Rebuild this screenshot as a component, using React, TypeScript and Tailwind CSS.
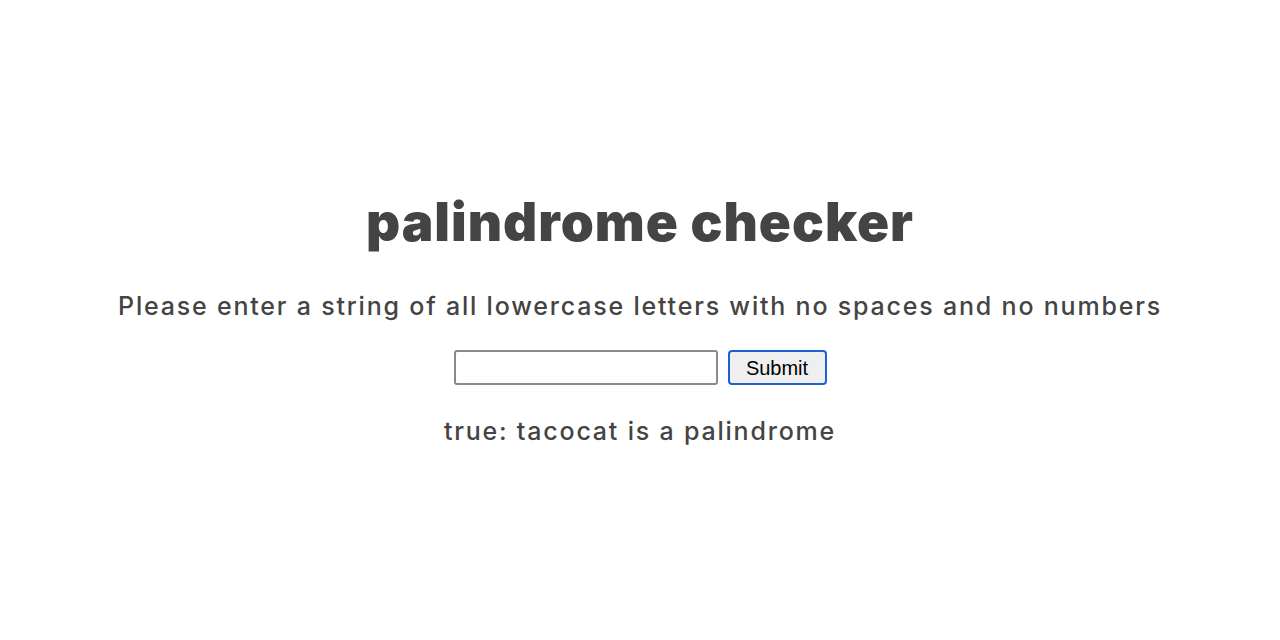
const App = () => {
  return (
    <div className="w-full h-[640px] bg-white flex flex-col items-center text-[#444] font-['Inter','Noto_Sans',sans-serif]">
      {/* TITLE */}
      <h1 className="mt-[190px] text-[53px] leading-[64px] font-black tracking-[1px]">
        palindrome checker
      </h1>

      <p className="mt-[36px] text-[25px] leading-[32px] font-medium tracking-[1.8px]">
        Please enter a string of all lowercase letters with no spaces and no numbers
      </p>

      {/* FORM */}
      <form className="mt-[28px] flex items-center gap-[10px]" onSubmit={(e) => e.preventDefault()}>
        <input
          type="text"
          className="w-[264px] h-[35px] border-2 border-[#8a8a8a] rounded-[3px] bg-white px-1 text-[18px]"
        />
        <button
          type="submit"
          className="w-[99px] h-[35px] border-2 border-[#1f5fd6] rounded-[4px] bg-[#efefef] text-[20px] text-black font-['Liberation_Sans',Arial,sans-serif]"
        >
          Submit
        </button>
      </form>

      <p className="mt-[30px] text-[25px] leading-[32px] font-medium tracking-[1.8px]">true: tacocat is a palindrome</p>
    </div>
  );
};

export default App;
